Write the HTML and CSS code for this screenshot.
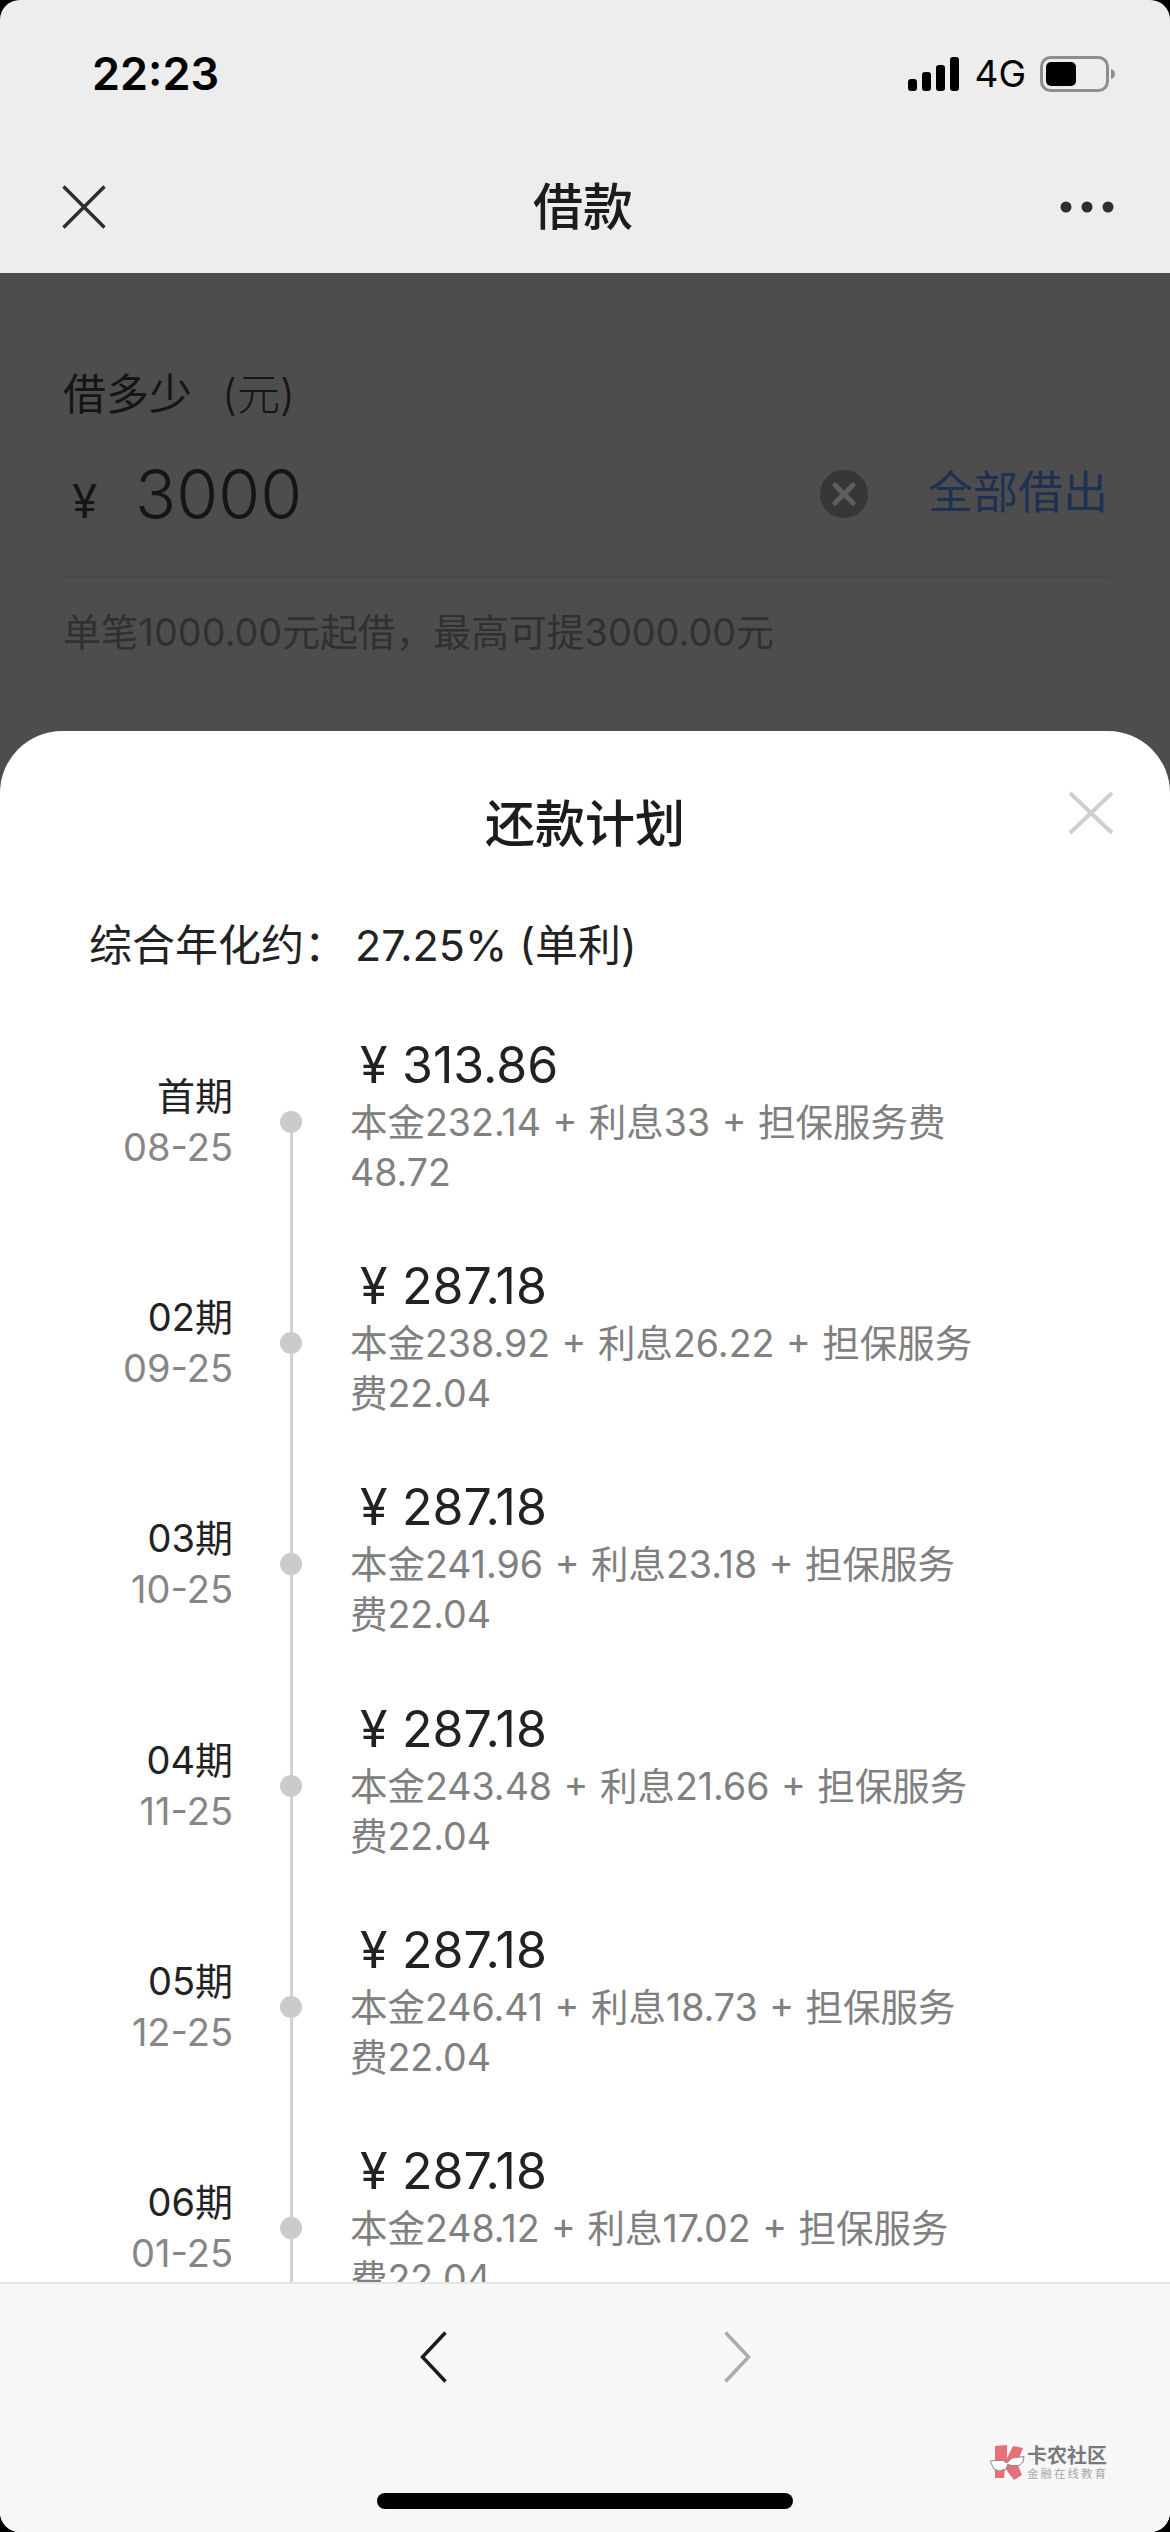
FILE: index.html
```html
<!DOCTYPE html>
<html lang="zh-CN">
<head>
<meta charset="utf-8">
<title>借款</title>
<link rel="stylesheet" href="styles.css">
</head>
<body>
<div class="phone">
  <header class="top">
    <div class="status">
      <span class="time">22:23</span>
      <div class="status-right">
        <svg class="signal" width="52" height="34" viewBox="0 0 52 34"><rect x="0" y="22" width="9" height="12" rx="3"/><rect x="14" y="15" width="9" height="19" rx="3"/><rect x="28" y="8" width="9" height="26" rx="3"/><rect x="42" y="0" width="9" height="34" rx="3"/></svg>
        <span class="net">4G</span>
        <svg class="battery" width="76" height="36" viewBox="0 0 76 36"><rect x="1.500" y="1.500" width="66" height="33" rx="9" fill="none" stroke="#8e8e8e" stroke-width="3"/><rect x="6" y="6" width="30" height="24" rx="5" fill="#000"/><path d="M71 13c2.500.5 4 2.500 4 5s-1.500 4.500-4 5z" fill="#8e8e8e"/></svg>
      </div>
    </div>
    <nav class="nav">
      <svg class="nav-close" width="44" height="44" viewBox="0 0 44 44"><path d="M1.500 1.500L42.500 42.500M42.500 1.500L1.500 42.500" fill="none" stroke="#2e2e2e" stroke-width="3.500"/></svg>
      <h1 class="nav-title">借款</h1>
      <svg class="nav-more" width="54" height="12" viewBox="0 0 54 12"><circle cx="6" cy="6" r="5.500"/><circle cx="27" cy="6" r="5.500"/><circle cx="48" cy="6" r="5.500"/></svg>
    </nav>
  </header>

  <main class="form">
    <div class="form-label">借多少<span class="unit">(元)</span></div>
    <div class="amount-row">
      <span class="yen">¥</span>
      <span class="amount">3000</span>
      <svg class="clear" width="48" height="48" viewBox="0 0 48 48"><circle cx="24" cy="24" r="24" fill="#363636"/><path d="M15 15L33 33M33 15L15 33" stroke="#5e5e5e" stroke-width="5" stroke-linecap="round" fill="none"/></svg>
      <span class="all">全部借出</span>
    </div>
    <p class="hint">单笔1000.00元起借，最高可提3000.00元</p>
  </main>

  <section class="sheet">
    <div class="sheet-head">
      <h2 class="sheet-title">还款计划</h2>
      <svg class="sheet-close" width="46" height="44" viewBox="0 0 46 44"><path d="M2 2L44 42M44 2L2 42" fill="none" stroke="#cfcfcf" stroke-width="4"/></svg>
    </div>
    <div class="rate">综合年化约：<span class="rate-val">27.25% (单利)</span></div>
    <div class="plan">
      <div class="plan-row">
        <div class="when"><div class="period">首期</div><div class="date">08-25</div></div>
        <div class="rail"><i class="dot"></i></div>
        <div class="info"><div class="pay"><span class="pay-y">¥</span>313.86</div><div class="detail">本金232.14 + 利息33 + 担保服务费<br>48.72</div></div>
      </div>
      <div class="plan-row">
        <div class="when"><div class="period">02期</div><div class="date">09-25</div></div>
        <div class="rail"><i class="dot"></i></div>
        <div class="info"><div class="pay"><span class="pay-y">¥</span>287.18</div><div class="detail">本金238.92 + 利息26.22 + 担保服务<br>费22.04</div></div>
      </div>
      <div class="plan-row">
        <div class="when"><div class="period">03期</div><div class="date">10-25</div></div>
        <div class="rail"><i class="dot"></i></div>
        <div class="info"><div class="pay"><span class="pay-y">¥</span>287.18</div><div class="detail">本金241.96 + 利息23.18 + 担保服务<br>费22.04</div></div>
      </div>
      <div class="plan-row">
        <div class="when"><div class="period">04期</div><div class="date">11-25</div></div>
        <div class="rail"><i class="dot"></i></div>
        <div class="info"><div class="pay"><span class="pay-y">¥</span>287.18</div><div class="detail">本金243.48 + 利息21.66 + 担保服务<br>费22.04</div></div>
      </div>
      <div class="plan-row">
        <div class="when"><div class="period">05期</div><div class="date">12-25</div></div>
        <div class="rail"><i class="dot"></i></div>
        <div class="info"><div class="pay"><span class="pay-y">¥</span>287.18</div><div class="detail">本金246.41 + 利息18.73 + 担保服务<br>费22.04</div></div>
      </div>
      <div class="plan-row">
        <div class="when"><div class="period">06期</div><div class="date">01-25</div></div>
        <div class="rail"><i class="dot"></i></div>
        <div class="info"><div class="pay"><span class="pay-y">¥</span>287.18</div><div class="detail">本金248.12 + 利息17.02 + 担保服务<br>费22.04</div></div>
      </div>
    </div>
    <footer class="bar">
      <div class="arrows">
        <svg width="28" height="52" viewBox="0 0 28 52"><path d="M25.500 1.500L2.500 26L25.500 50.500" fill="none" stroke="#1c1c1c" stroke-width="3.500"/></svg>
        <svg width="28" height="52" viewBox="0 0 28 52"><path d="M2.500 1.500L25.500 26L2.500 50.500" fill="none" stroke="#ababab" stroke-width="3.500"/></svg>
      </div>
      <div class="home"></div>
    </footer>
  </section>

  <div class="mark">
    <svg width="36" height="38" viewBox="0 0 36 38"><path d="M5 3L17 2V15L23 3L33 5L27 20L32 32L24 37L15 25L14 35H5z" fill="#e8707c"/><path d="M0 18L5 17.500L13 17.500L17 20L22 15L34 13.500L33 19L29 22.500L21 22.500L18 21L16 26L9 28L4 26z" fill="#fff" stroke="#8c8c8c" stroke-width="1"/></svg>
    <div class="mark-text"><div class="mark-name">卡农社区</div><div class="mark-sub">金融在线教育</div></div>
  </div>
</div>
</body>
</html>
```

FILE: styles.css
```css
* { box-sizing: border-box; }
html, body { margin: 0; padding: 0; background: #000; }
body {
  width: 1170px;
  height: 2532px;
  overflow: hidden;
  font-family: Inter, "Noto Sans CJK SC", sans-serif;
}
h1, h2, p { margin: 0; font-weight: 400; }

.phone {
  position: relative;
  width: 1170px;
  height: 2532px;
  display: flex;
  flex-direction: column;
  overflow: hidden;
  border-radius: 20px;
  background: #4d4d4d;
}

.top { height: 273px; background: #ededed; flex: none; }
.status {
  height: 146px;
  padding: 44px 54px 0 92px;
  display: flex;
  justify-content: space-between;
  align-items: flex-start;
}
.time { font-size: 45px; line-height: 60px; font-weight: 600; color: #000; }
.status-right { display: flex; align-items: center; gap: 14px; height: 60px; }
.net { font-size: 37px; line-height: 40px; color: #000; }
.nav {
  height: 127px;
  padding: 0 56px 6px 62px;
  display: flex;
  align-items: center;
  justify-content: space-between;
}
.nav-title { font-size: 50px; line-height: 64px; font-weight: 500; color: #1c1c1c; }
.nav-more { fill: #2e2e2e; }

.form { padding: 93px 62px 0 63px; color: #151515; }
.form-label { font-size: 43px; line-height: 56px; }
.unit { margin-left: 30px; font-weight: 300; }
.amount-row { display: flex; align-items: center; height: 90px; margin-top: 27px; }
.yen { font-size: 46px; margin-left: 9px; width: 63px; margin-top: 14px; }
.amount { font-size: 68px; line-height: 90px; font-weight: 300; flex: 1; }
.clear { margin-right: 60px; margin-top: 0; }
.all { font-size: 45px; line-height: 60px; color: #1e3152; margin-top: -2px; }
.hint {
  margin-top: 37px;
  padding-top: 30px;
  border-top: 2px solid #474747;
  font-size: 37.8px;
  line-height: 48px;
  color: #303030;
}

.sheet {
  position: absolute;
  left: 0; right: 0; top: 731px; bottom: 0;
  display: flex;
  flex-direction: column;
  overflow: hidden;
  background: #fff;
  border-radius: 62px 62px 0 0;
}
.sheet-head { height: 184px; padding-top: 59px; position: relative; flex: none; }
.sheet-title { text-align: center; font-size: 50px; line-height: 68px; font-weight: 500; color: #1c1c1c; }
.sheet-close { position: absolute; right: 56px; top: 60px; }
.rate { height: 60px; padding-left: 89px; font-size: 43px; line-height: 60px; color: #222; flex: none; }
.rate-val { margin-left: 8px; }

.plan { flex: 1; min-height: 0; overflow: hidden; padding-top: 58px; }
.plan-row {
  display: grid;
  grid-template-columns: 233px 117px 1fr;
  height: 221.2px;
}
.when { text-align: right; padding-top: 38px; }
.period { font-size: 38px; line-height: 50px; color: #222; }
.date { font-size: 38px; line-height: 52px; color: #868686; }
.rail { position: relative; }
.rail::before {
  content: "";
  position: absolute;
  left: 57px; top: 0; bottom: 0;
  width: 3px;
  background: #d2d2d2;
}
.plan-row:first-child .rail::before { top: 89px; }
.dot {
  position: absolute;
  left: 47px; top: 78px;
  width: 22px; height: 22px;
  border-radius: 50%;
  background: #cbcbcb;
}
.pay { font-size: 50px; line-height: 64px; color: #222; }
.pay-y { display: inline-block; margin-left: 10px; width: 42px; }
.detail { font-size: 37.5px; line-height: 50px; word-spacing: 1px; color: #808080; margin-top: 1px; white-space: nowrap; }

.bar { height: 250px; flex: none; background: #f7f7f7; border-top: 2px solid #e6e6e6; position: relative; }
.arrows { position: absolute; left: 420px; top: 47px; display: flex; gap: 275px; }
.home {
  position: absolute;
  left: 377px; top: 209px;
  width: 416px; height: 16px;
  border-radius: 8px;
  background: #000;
}

.mark {
  position: absolute;
  left: 990px; top: 2443px;
  display: flex;
  gap: 1px;
  align-items: flex-start;
}
.mark-text { color: #7a7a7a; padding-top: 2px; }
.mark-name { font-size: 20px; line-height: 22px; font-weight: 700; white-space: nowrap; }
.mark-sub { font-size: 11.500px; line-height: 15px; letter-spacing: 2px; color: #a8a8a8; white-space: nowrap; }
```
